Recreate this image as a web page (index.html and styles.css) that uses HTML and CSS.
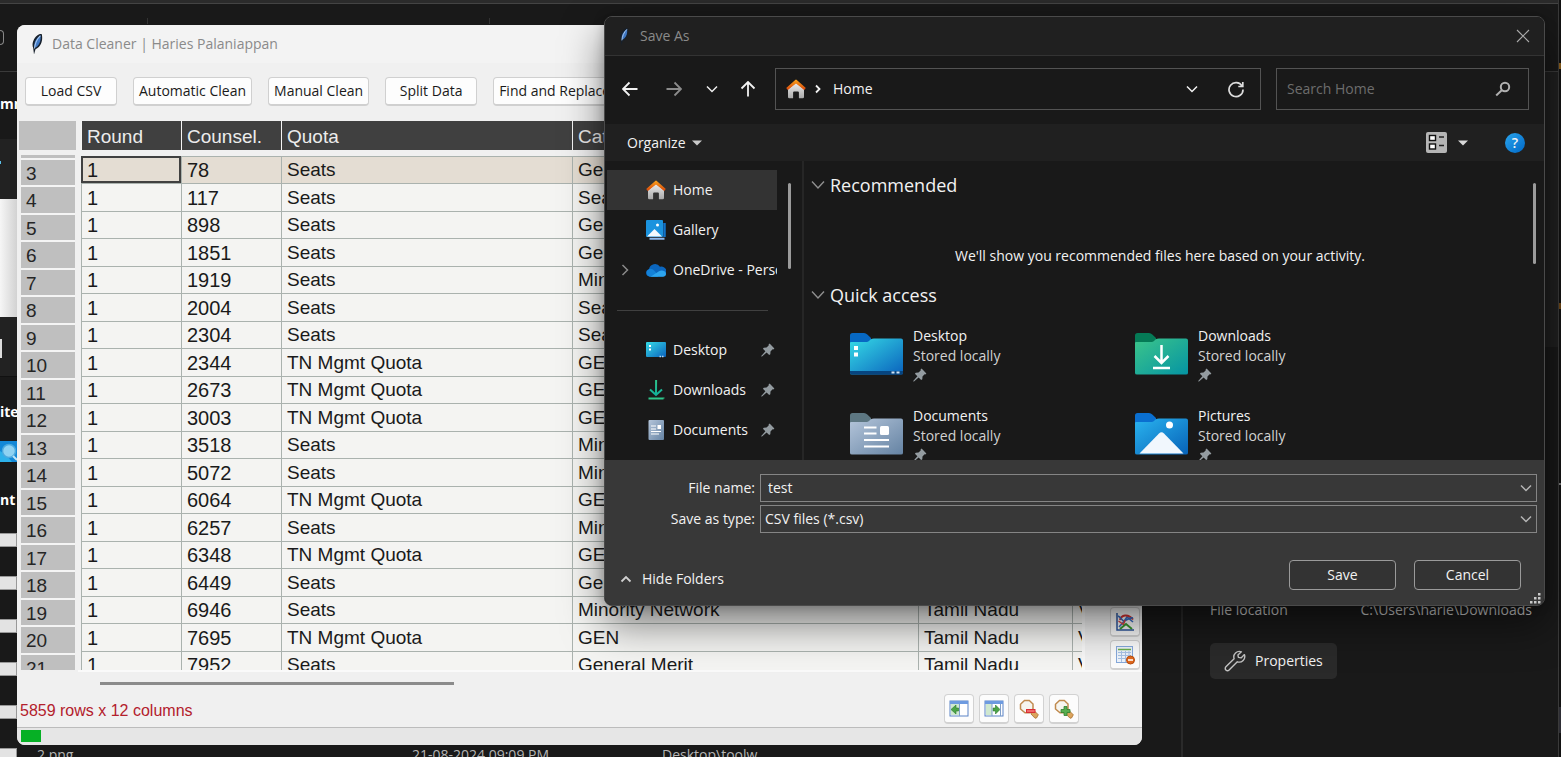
FILE: index.html
```
<!DOCTYPE html>
<html lang="en">
<head>
<meta charset="utf-8">
<title>Data Cleaner</title>
<link rel="stylesheet" href="styles.css">
</head>
<body>
<svg width="0" height="0" class="defs" aria-hidden="true">
  <defs>
    <linearGradient id="g-roof" x1="0" y1="0" x2="0" y2="1"><stop offset="0" stop-color="#f9a01b"/><stop offset="1" stop-color="#d8480b"/></linearGradient>
    <linearGradient id="g-wall" x1="0" y1="0" x2="0" y2="1"><stop offset="0" stop-color="#f2f2f2"/><stop offset="1" stop-color="#a9a9a9"/></linearGradient>
    <linearGradient id="g-desk" x1="0" y1="0" x2="1" y2="1"><stop offset="0" stop-color="#36dbe6"/><stop offset="1" stop-color="#0a62bd"/></linearGradient>
    <linearGradient id="g-down" x1="0" y1="0" x2="1" y2="1"><stop offset="0" stop-color="#3cc58a"/><stop offset="1" stop-color="#0594a3"/></linearGradient>
    <linearGradient id="g-docs" x1="0" y1="0" x2="1" y2="1"><stop offset="0" stop-color="#b4c5da"/><stop offset="1" stop-color="#6583a3"/></linearGradient>
    <linearGradient id="g-pics" x1="0" y1="0" x2="1" y2="1"><stop offset="0" stop-color="#2ab4ef"/><stop offset="1" stop-color="#0762b8"/></linearGradient>
    <linearGradient id="g-arrow" x1="0" y1="0" x2="0" y2="1"><stop offset="0" stop-color="#2fc58a"/><stop offset="1" stop-color="#12b09a"/></linearGradient>
    <symbol id="feather" viewBox="0 0 14 22">
      <path d="M4 21.500 3.200 15C1.600 11 3.200 5.500 7.500 2.200 9.200.9 11 .7 11.800 1.200c1 4.600.2 9.400-3 12.800-1 1.100-2.200 1.800-3.300 2.200z" fill="#17202b"/>
      <path d="M4.600 14.200C3.600 9.800 6 5 10.600 2.400c.6 4.200-.6 8.400-3.400 11-.9.800-1.600 1.100-2.600 1z" fill="#3f78c4"/>
      <path d="M4.500 15.500C5 10.500 7 6 10.400 2.600" stroke="#a9c8ee" stroke-width="1.100" fill="none"/>
    </symbol>
    <symbol id="home" viewBox="0 0 20 20">
      <path d="M2 9.500 10 2.500l8 7V18a1.300 1.300 0 0 1-1.300 1.300h-3.800V13.500a1 1 0 0 0-1-1H8.100a1 1 0 0 0-1 1v5.800H3.300A1.300 1.300 0 0 1 2 18z" fill="url(#g-wall)"/>
      <path d="M9.200.9a1.200 1.200 0 0 1 1.600 0l9 8.200-1.600 1.800L10 3.700 1.800 10.900.2 9.100z" fill="url(#g-roof)"/>
      <path d="M10 1.200 18.800 9.600 18 10.500 10 4.600 2 10.500 1.200 9.600z" fill="url(#g-roof)"/>
    </symbol>
    <symbol id="pin" viewBox="0 0 14 14">
      <path d="M8.600.6 13.400 5.400 12.300 6.500 11.600 6.300 9.500 8.500 9.300 11.200 8.200 12.100 5.600 9.500 1 13.500.3 13.500.4 12.800 4.400 8.300 1.900 5.800 2.800 4.700 5.500 4.600 7.700 2.400 7.500 1.700z" fill="#939ba0"/>
    </symbol>
    <symbol id="chev-down" viewBox="0 0 12 8"><path d="M1 1.500 6 6.500l5-5" fill="none" stroke="currentColor" stroke-width="1.500"/></symbol>
    <symbol id="magnifier" viewBox="0 0 20 20">
      <path d="M12 12.500 15 11.500 19.300 15.800 17.500 19 16 19.200 12 15z" fill="#dba45d" stroke="#a86f2d" stroke-width=".8"/>
      <path d="M5.500 1.500h4.800L14 5v5l-3.600 3.800H6L1.500 10V5.300z" fill="#f6f5ef" stroke="#c08a4e" stroke-width="1.500"/>
    </symbol>
  </defs>
</svg>

<div class="desktop">
  <section class="explorer" aria-label="File explorer">
    <div class="ribbon"></div>
    <div class="tab-marks"><i></i><i></i></div>
    <aside class="side">
      <div class="side-top"><span class="checkbox"></span></div>
      <div class="side-tab"><b>mm</b></div>
      <div class="side-dark"><span class="tick"></span></div>
      <div class="side-light"></div>
      <div class="side-dark short"><span class="page"></span></div>
      <div class="side-label"><b>ites</b></div>
      <svg class="side-pic" viewBox="0 0 17 21"><rect width="17" height="21" fill="#1287d6"/><path d="M0 10 6 14 12 21H0z" fill="#2db1ea"/><circle cx="9" cy="10" r="6.500" fill="#8fd2f2" stroke="#4aa9de" stroke-width="1.500"/><path d="M13 15l4 4" stroke="#bfe5f8" stroke-width="2"/></svg>
      <div class="side-label second"><b>nt</b></div>
      <div class="thumbs"><i></i><i></i><i></i><i></i><i></i><i></i></div>
    </aside>
    <div class="file-row"><span>2.png</span><span>21-08-2024 09:09 PM</span><span>Desktop\toolw</span></div>
    <aside class="details">
      <div class="details-bar"></div>
      <div class="preview"></div>
      <div class="info">
        <dl><dt>File location</dt><dd>C:\Users\harie\Downloads</dd></dl>
        <button class="props" type="button">
          <svg width="22" height="22" viewBox="0 0 22 22" fill="none" stroke="#c4c4c4" stroke-width="1.400" stroke-linejoin="round"><path d="M17.400 1.800a5.600 5.600 0 0 0-7.300 7L1.900 16.800a2.200 2.200 0 0 0 3.200 3.200l8.200-8.200a5.600 5.600 0 0 0 7.100-7.200l-3.300 3.300-2.700-.5-.5-2.500z"/></svg>
          Properties
        </button>
      </div>
    </aside>
    <div class="edge"><i class="gold"></i><i class="gold second"></i><i class="line"></i><i class="bar"></i></div>
  </section>

  <main class="cleaner">
    <header class="cleaner-title"><svg width="14" height="22"><use href="#feather"/></svg><h1>Data Cleaner | Haries Palaniappan</h1></header>
    <nav class="actions">
      <button type="button">Load CSV</button>
      <button type="button">Automatic Clean</button>
      <button type="button">Manual Clean</button>
      <button type="button">Split Data</button>
      <button type="button">Find and Replace</button>
    </nav>
    <div class="work">
      <div class="index">
        <div class="corner"></div>
        <ol>
          <li></li><li>3</li><li>4</li><li>5</li><li>6</li><li>7</li><li>8</li><li>9</li><li>10</li><li>11</li><li>12</li><li>13</li><li>14</li><li>15</li><li>16</li><li>17</li><li>18</li><li>19</li><li>20</li><li>21</li>
        </ol>
      </div>
      <div class="sheet">
        <table>
          <colgroup><col class="c-num"><col class="c-num"><col class="c-quota"><col class="c-cat"><col class="c-state"><col class="c-city"></colgroup>
          <thead><tr><th>Round</th><th>Counsel.</th><th>Quota</th><th>Category</th><th>State</th><th>College</th></tr></thead>
          <tbody>
            <tr class="current"><td>1</td><td>78</td><td>Seats</td><td>General Merit</td><td>Tamil Nadu</td><td>Vellore</td></tr>
            <tr><td>1</td><td>117</td><td>Seats</td><td>Seats</td><td>Tamil Nadu</td><td>Vellore</td></tr>
            <tr><td>1</td><td>898</td><td>Seats</td><td>General Merit</td><td>Tamil Nadu</td><td>Vellore</td></tr>
            <tr><td>1</td><td>1851</td><td>Seats</td><td>General Merit</td><td>Tamil Nadu</td><td>Vellore</td></tr>
            <tr><td>1</td><td>1919</td><td>Seats</td><td>Minority Network</td><td>Tamil Nadu</td><td>Vellore</td></tr>
            <tr><td>1</td><td>2004</td><td>Seats</td><td>Seats</td><td>Tamil Nadu</td><td>Vellore</td></tr>
            <tr><td>1</td><td>2304</td><td>Seats</td><td>Seats</td><td>Tamil Nadu</td><td>Vellore</td></tr>
            <tr><td>1</td><td>2344</td><td>TN Mgmt Quota</td><td>GEN</td><td>Tamil Nadu</td><td>Vellore</td></tr>
            <tr><td>1</td><td>2673</td><td>TN Mgmt Quota</td><td>GEN</td><td>Tamil Nadu</td><td>Vellore</td></tr>
            <tr><td>1</td><td>3003</td><td>TN Mgmt Quota</td><td>GEN</td><td>Tamil Nadu</td><td>Vellore</td></tr>
            <tr><td>1</td><td>3518</td><td>Seats</td><td>Minority Network</td><td>Tamil Nadu</td><td>Vellore</td></tr>
            <tr><td>1</td><td>5072</td><td>Seats</td><td>Minority Network</td><td>Tamil Nadu</td><td>Vellore</td></tr>
            <tr><td>1</td><td>6064</td><td>TN Mgmt Quota</td><td>GEN</td><td>Tamil Nadu</td><td>Vellore</td></tr>
            <tr><td>1</td><td>6257</td><td>Seats</td><td>Minority Network</td><td>Tamil Nadu</td><td>Vellore</td></tr>
            <tr><td>1</td><td>6348</td><td>TN Mgmt Quota</td><td>GEN</td><td>Tamil Nadu</td><td>Vellore</td></tr>
            <tr><td>1</td><td>6449</td><td>Seats</td><td>General Merit</td><td>Tamil Nadu</td><td>Vellore</td></tr>
            <tr><td>1</td><td>6946</td><td>Seats</td><td>Minority Network</td><td>Tamil Nadu</td><td>Vellore</td></tr>
            <tr><td>1</td><td>7695</td><td>TN Mgmt Quota</td><td>GEN</td><td>Tamil Nadu</td><td>Vellore</td></tr>
            <tr><td>1</td><td>7952</td><td>Seats</td><td>General Merit</td><td>Tamil Nadu</td><td>Vellore</td></tr>
          </tbody>
        </table>
      </div>
      <div class="tools">
        <button class="tool" type="button" aria-label="Plot"><svg width="20" height="20" viewBox="0 0 20 20" fill="none"><path d="M2 1v17h17" stroke="#2b55a0" stroke-width="1.500"/><path d="M4 15 9 9.500l3-4.500 6 5" stroke="#3b6fc6" stroke-width="1.600"/><path d="M5 8c1-5 8-7 13-.5" stroke="#d83232" stroke-width="2"/><path d="M3 4c3 1 4 5 6 5s5-4 9-3" stroke="#3b6fc6" stroke-width="1.600"/><path d="m3.500 9 5 3.500L10 8" stroke="#e04545" stroke-width="1.500"/><path d="m5 17 6-5 6 5" stroke="#3b9a32" stroke-width="2"/></svg></button>
        <button class="tool" type="button" aria-label="Remove table"><svg width="20" height="20" viewBox="0 0 20 20"><rect x="1.500" y="1.500" width="16" height="16" fill="#eef4fc" stroke="#86a9dc"/><path d="M3 4.500h13" stroke="#6bb04c" stroke-width="1.500"/><path d="M3 7.500h13M3 10.500h13M3 13.500h13M6.500 6v11M10.500 6v11M14 6v11" stroke="#a7c2e6"/><circle cx="15.500" cy="15" r="4" fill="#e2691e" stroke="#b54d10"/><path d="M13 15h5" stroke="#fff" stroke-width="1.600"/></svg></button>
      </div>
    </div>
    <div class="hscroll"><div class="thumb"></div></div>
    <footer class="status">
      <p>5859 rows x 12 columns</p>
      <button class="tool" type="button" aria-label="Previous pane"><svg width="20" height="20" viewBox="0 0 20 20"><rect x="1" y="2" width="18" height="15" fill="#fff" stroke="#5b83c6"/><rect x="1" y="2" width="18" height="3" fill="#6d9ae0"/><rect x="2" y="5" width="8" height="11" fill="#cfe8cf"/><path d="M2 10.500 7 6v3h2.500v3H7v3z" fill="#4ca448" stroke="#2c7a2c" stroke-width=".6"/><path d="M10.500 5v12" stroke="#7f9fca"/></svg></button>
      <button class="tool" type="button" aria-label="Next pane"><svg width="20" height="20" viewBox="0 0 20 20"><rect x="1" y="2" width="18" height="15" fill="#fff" stroke="#5b83c6"/><rect x="1" y="2" width="18" height="3" fill="#6d9ae0"/><rect x="2" y="5" width="6" height="11" fill="#cfe8cf"/><path d="M16 10.500 11.500 6v3H9v3h2.500v3z" fill="#4ca448" stroke="#2c7a2c" stroke-width=".6"/><path d="M8 5v12M16.500 5v12" stroke="#7f9fca"/></svg></button>
      <button class="tool" type="button" aria-label="Zoom out"><svg width="20" height="20" viewBox="0 0 20 20"><use href="#magnifier"/><rect x="7.500" y="10.500" width="8.500" height="3" fill="#f06a6a" stroke="#d92f35"/></svg></button>
      <button class="tool" type="button" aria-label="Zoom in"><svg width="20" height="20" viewBox="0 0 20 20"><use href="#magnifier"/><path d="M10 7.500h3v3h3v3h-3v3h-3v-3H7v-3h3z" fill="#58ad50" stroke="#2f7f2d" stroke-width=".8"/></svg></button>
    </footer>
    <div class="progress"><div class="chunk"></div></div>
  </main>

  <section class="dialog" role="dialog" aria-label="Save As">
    <header class="dialog-title">
      <svg width="12" height="19"><use href="#feather"/></svg><h2>Save As</h2>
      <button class="plain" type="button" aria-label="Close"><svg width="14" height="14" viewBox="0 0 14 14"><path d="m1 1 12 12M13 1 1 13" stroke="#a8a8a8" stroke-width="1.100"/></svg></button>
    </header>
    <div class="nav-row">
      <button class="plain" type="button" aria-label="Back"><svg width="16" height="16" viewBox="0 0 16 16" fill="none" stroke="#f2f2f2" stroke-width="1.800"><path d="M15.500 8H1M7.500 1.500 1 8l6.500 6.500"/></svg></button>
      <button class="plain" type="button" aria-label="Forward"><svg width="16" height="16" viewBox="0 0 16 16" fill="none" stroke="#8c8c8c" stroke-width="1.800"><path d="M.5 8H15M8.500 1.500 15 8l-6.500 6.500"/></svg></button>
      <button class="plain recent" type="button" aria-label="Recent"><svg width="12" height="8"><use href="#chev-down"/></svg></button>
      <button class="plain up" type="button" aria-label="Up"><svg width="16" height="16" viewBox="0 0 16 16" fill="none" stroke="#f2f2f2" stroke-width="1.800"><path d="M8 15.500V1M1.500 7.500 8 1l6.500 6.500"/></svg></button>
      <div class="address">
        <svg width="20" height="20"><use href="#home"/></svg>
        <svg width="6" height="10" viewBox="0 0 6 10"><path d="m1 1.500 3.500 3.500L1 8.500" fill="none" stroke="#f0f0f0" stroke-width="1.800"/></svg>
        <span>Home</span>
        <button class="plain" type="button" aria-label="History"><svg width="12" height="8"><use href="#chev-down"/></svg></button>
        <button class="plain" type="button" aria-label="Refresh"><svg width="18" height="18" viewBox="0 0 18 18" fill="none" stroke="#ddd" stroke-width="1.700"><path d="M15 6A7 7 0 1 0 16 9.500"/><path d="M15.800 2v4.500h-4.500"/></svg></button>
      </div>
      <label class="search"><input type="text" placeholder="Search Home" aria-label="Search Home"><svg width="16" height="16" viewBox="0 0 16 16" fill="none" stroke="#b0b0b0" stroke-width="2"><circle cx="10" cy="6" r="4.200"/><path d="M7 9 1.200 14.500"/></svg></label>
    </div>
    <div class="command-row">
      <button class="plain organize" type="button">Organize <svg width="10" height="6" viewBox="0 0 10 6"><path d="M0 .5h10L5 5.500z" fill="#c9c9c9"/></svg></button>
      <button class="plain view" type="button" aria-label="View"><svg width="21" height="21" viewBox="0 0 21 21"><rect width="21" height="21" rx="2" fill="#b5b5b5"/><rect x="3.500" y="3.500" width="6" height="5" fill="#fff" stroke="#111" stroke-width="1.400"/><rect x="3.500" y="12" width="6" height="5" fill="#fff" stroke="#111" stroke-width="1.400"/><path d="M13 5h5M13 13.500h5" stroke="#222" stroke-width="1.400"/></svg><svg width="10" height="6" viewBox="0 0 10 6"><path d="M0 .5h10L5 5.500z" fill="#d9d9d9"/></svg></button>
      <button class="plain" type="button" aria-label="Help"><span class="help">?</span></button>
    </div>
    <div class="panes">
      <nav class="tree">
        <ul>
          <li class="on"><i></i><svg width="20" height="20"><use href="#home"/></svg><a href="#home-view">Home</a></li>
          <li><i></i><svg width="20" height="20" viewBox="0 0 20 20"><path d="M18.500 3v14" stroke="#1173c9" stroke-width="2.500"/><path d="M3.500 18.700h15" stroke="#8cb8ee" stroke-width="2"/><rect width="17" height="17" rx="1" fill="#1b93de"/><circle cx="11.500" cy="5" r="1.500" fill="#fff"/><path d="M1 16.500 8.500 9l7.500 7.500z" fill="#f3f8fd"/></svg><a href="#gallery">Gallery</a></li>
          <li class="long"><i><svg width="8" height="12" viewBox="0 0 8 12"><path d="m1.500 1 5 5-5 5" fill="none" stroke="#8a8a8a" stroke-width="1.500"/></svg></i><svg width="20" height="20" viewBox="0 0 20 20"><path d="M3.500 16.500A3.700 3.700 0 0 1 3 9.200 6 6 0 0 1 14 6.800a5 5 0 0 1 3 9.700z" fill="#0b66be"/><path d="M4 16.800a4 4 0 0 1-1-7.600c3-1.500 7 2 9 7.600z" fill="#1482d8"/><path d="M4.500 16.800 13 11.200c3-1.500 6.700 0 7 2.500.1 2-1.200 3.100-3 3.100z" fill="#2da4ee"/></svg><a href="#onedrive">OneDrive - Personal</a></li>
        </ul>
        <hr>
        <ul>
          <li><i></i><svg width="20" height="20" viewBox="0 0 20 20"><rect y="2" width="20" height="15" rx="1" fill="url(#g-desk)"/><path d="M3 5h2v2H3zM3 8.500h2v2H3z" fill="#fff"/><path d="M13.500 16.500h1.500M16 16.500h1.500" stroke="#b9d8f4" stroke-width="1.500"/></svg><a href="#desktop">Desktop</a><svg width="14" height="14"><use href="#pin"/></svg></li>
          <li><i></i><svg width="20" height="20" viewBox="0 0 20 20" fill="none" stroke="url(#g-arrow)" stroke-width="2"><path d="M10.100 0 10 15M4 9.500l6 5.500 6-5.500"/><path d="M2.500 18.500h15v.1" stroke="#2fc58a"/></svg><a href="#downloads">Downloads</a><svg width="14" height="14"><use href="#pin"/></svg></li>
          <li><i></i><svg width="20" height="20" viewBox="0 0 20 20"><rect x="2.500" width="15.500" height="20" rx="1" fill="url(#g-docs)"/><path d="M5 6h5M5 9h5M5 11.500h10M5 14h8" stroke="#fff" stroke-width="1.200"/><path d="M11.500 5H15v4h-3.500z" fill="#fff"/></svg><a href="#documents">Documents</a><svg width="14" height="14"><use href="#pin"/></svg></li>
        </ul>
        <div class="scroll-thumb"></div>
      </nav>
      <div class="content">
        <h3><svg width="14" height="10" viewBox="0 0 14 10"><path d="m1 1.500 6 6.500 6-6.500" fill="none" stroke="#8f8f8f" stroke-width="1.400"/></svg>Recommended</h3>
        <p class="empty">We'll show you recommended files here based on your activity.</p>
        <h3><svg width="14" height="10" viewBox="0 0 14 10"><path d="m1 1.500 6 6.500 6-6.500" fill="none" stroke="#8f8f8f" stroke-width="1.400"/></svg>Quick access</h3>
        <div class="quick">
          <div class="item"><svg width="53" height="42" viewBox="0 0 53 42"><path d="M0 2.500Q0 0 2.500 0H14q2 0 3.300 1.500L21 5v5H0z" fill="#0768c3"/><path d="M0 10q0-1 1-1h15.500q1.500 0 2.500-1l1.500-1.500Q22 5.500 24 5.500H51q2 0 2 2v32.500q0 1.500-2 1.500H2q-2 0-2-1.500z" fill="url(#g-desk)"/><path d="M0 38h53v2q0 1.500-2 1.500H2Q0 41.500 0 40z" fill="#074580"/><path d="M4 13h4v4H4zM4 19.500h4v4H4z" fill="#fff"/><path d="M41.500 38.500h3v2h-3zM46.500 38.500h3v2h-3z" fill="#cfe4f6"/></svg><div><b>Desktop</b><span>Stored locally</span><svg width="14" height="14"><use href="#pin"/></svg></div></div>
          <div class="item"><svg width="53" height="42" viewBox="0 0 53 42"><path d="M0 2.500Q0 0 2.500 0H14q2 0 3.300 1.500L21 5v5H0z" fill="#057a56"/><path d="M0 10q0-1 1-1h15.500q1.500 0 2.500-1l1.500-1.500Q22 5.500 24 5.500H51q2 0 2 2v32.500q0 1.500-2 1.500H2q-2 0-2-1.500z" fill="url(#g-down)"/><path d="M26.500 12v17M19.500 23l7 7 7-7M18 35h17" fill="none" stroke="#fff" stroke-width="2.500"/></svg><div><b>Downloads</b><span>Stored locally</span><svg width="14" height="14"><use href="#pin"/></svg></div></div>
          <div class="item"><svg width="53" height="42" viewBox="0 0 53 42"><path d="M0 2.500Q0 0 2.500 0H14q2 0 3.300 1.500L21 5v5H0z" fill="#5d7782"/><path d="M0 10q0-1 1-1h15.500q1.500 0 2.500-1l1.500-1.500Q22 5.500 24 5.500H51q2 0 2 2v32.500q0 1.500-2 1.500H2q-2 0-2-1.500z" fill="url(#g-docs)"/><path d="M14 14.500h12.500M14 20.500h12.500M14 27h25M14 33.500h25" stroke="#fff" stroke-width="2.200"/><rect x="30" y="13" width="9" height="9" rx="1.500" fill="#fff"/></svg><div><b>Documents</b><span>Stored locally</span><svg width="14" height="14"><use href="#pin"/></svg></div></div>
          <div class="item"><svg width="53" height="42" viewBox="0 0 53 42"><path d="M0 2.500Q0 0 2.500 0H14q2 0 3.300 1.500L21 5v5H0z" fill="#0a6fd0"/><path d="M0 10q0-1 1-1h15.500q1.500 0 2.500-1l1.500-1.500Q22 5.500 24 5.500H51q2 0 2 2v32.500q0 1.500-2 1.500H2q-2 0-2-1.500z" fill="url(#g-pics)"/><path d="M4.500 40.500 24 20.500q2.500-2.500 5 0l19.500 20z" fill="#f1f7fd"/><circle cx="34.500" cy="12" r="3.500" fill="#fff"/></svg><div><b>Pictures</b><span>Stored locally</span><svg width="14" height="14"><use href="#pin"/></svg></div></div>
        </div>
        <div class="scroll-thumb"></div>
      </div>
    </div>
    <footer class="save-form">
      <div class="fields">
        <label for="fname">File name:</label>
        <div class="combo"><input id="fname" type="text" value="test"><svg width="12" height="8"><use href="#chev-down"/></svg></div>
        <label for="ftype">Save as type:</label>
        <div class="combo"><select id="ftype"><option>CSV files (*.csv)</option></select><svg width="12" height="8"><use href="#chev-down"/></svg></div>
      </div>
      <div class="buttons">
        <button class="plain hide" type="button"><svg width="12" height="8" viewBox="0 0 12 8"><path d="m1.500 6.500 4.500-4.500 4.500 4.500" fill="none" stroke="#d0d0d0" stroke-width="1.800"/></svg>Hide Folders</button>
        <button class="push" type="button">Save</button>
        <button class="push" type="button">Cancel</button>
      </div>
      <svg class="grip" width="11" height="11" viewBox="0 0 11 11" fill="#c9c9c9"><path d="M8 0h2.500v2.500H8zM4 4h2.500v2.500H4zM8 4h2.500v2.500H8zM0 8h2.500v2.500H0zM4 8h2.500v2.500H4zM8 8h2.500v2.500H8z"/></svg>
    </footer>
  </section>
</div>
</body>
</html>
```
FILE: styles.css
```
* { box-sizing: border-box; margin: 0; padding: 0; }
html, body { height: 100%; }
body {
  background: #191919;
  color: #f2f2f2;
  font: 14px/20px "Open Sans", "Noto Sans", sans-serif;
  overflow: hidden;
}
button, input, select { font: inherit; color: inherit; background: none; border: 0; outline: 0; }
a { color: inherit; text-decoration: none; }
ul, ol { list-style: none; }
svg { display: block; flex: none; }
.defs { position: absolute; }
.plain { display: flex; align-items: center; justify-content: center; }
.desktop { position: relative; height: 100vh; overflow: hidden; }

/* file explorer behind the windows */
.explorer {
  height: 100%;
  display: grid;
  grid-template: 4px 20px 1fr 14px / 17px 1fr 377px 3px;
}
.ribbon { grid-area: 1 / 1 / 2 / 4; background: #2b2b2b; border-bottom: 1px solid #444; }
.tab-marks { grid-area: 2 / 1 / 3 / 3; display: flex; gap: 341px; padding: 14px 0 0 147px; }
.tab-marks i { width: 1px; background: #333; }
.side { grid-area: 2 / 1 / 5 / 2; overflow: hidden; display: flex; flex-direction: column; color: #fff; }
.side > * { flex: none; }
.side-top { height: 68px; padding-top: 26px; border-bottom: 1px solid #3a3a3a; }
.checkbox { display: block; width: 4px; height: 15px; border: 1px solid #888; border-left: 0; border-radius: 0 4px 4px 0; }
.side-tab { height: 67px; padding-top: 22px; }
.side-dark { height: 60px; background: #222; padding-top: 22px; }
.side-dark.short { border-bottom: 1px solid #111; }
.tick { display: block; width: 1px; height: 3px; background: #5bc0e8; }
.side-light { height: 118px; background: linear-gradient(90deg, #f6f6f6, #d2d2d2); }
.page { display: block; width: 2px; height: 19px; background: #ddd; }
.side-label { height: 64px; padding-top: 25px; }
.side-label.second { height: 71px; padding-top: 28px; }
.side-pic { width: 17px; height: 21px; }
.thumbs { display: grid; gap: 29px; }
.thumbs i { height: 14px; border: 1px solid #999; border-left: 0; background: #e3e3e3; }
.file-row { grid-area: 4 / 1 / 5 / 3; display: grid; grid-template-columns: 375px 250px 1fr; padding: 2px 0 0 37px; color: #b5b5b5; overflow: hidden; }
.details { grid-area: 2 / 3 / 5 / 4; display: flex; flex-direction: column; overflow: hidden; }
.details-bar { height: 68px; border-bottom: 1px solid #3a3a3a; }
.preview { height: 275px; background: #202020; }
.info { flex: 1; border-left: 2px solid #2a2a2a; padding: 253px 26px 0 27px; }
.info dl { display: flex; justify-content: space-between; color: #c8c8c8; }
.props { display: flex; align-items: center; gap: 9px; height: 36px; margin-top: 23px; padding: 0 14px; background: #2a2a2a; border-radius: 5px; }
.edge { grid-area: 1 / 4 / 5 / 5; border-left: 1px solid #3a3a3a; display: flex; flex-direction: column; background: #121212; }
.edge .gold { height: 6px; margin-top: 63px; background: #8a5d1a; }
.edge .gold.second { margin-top: 234px; background: #6b4414; }
.edge .line { height: 2px; margin-top: 174px; background: #777; }
.edge .bar { height: 26px; margin-top: 222px; background: #2e2e35; }

/* data cleaner */
.cleaner {
  position: absolute;
  inset: 25px 419px 12px 17px;
  display: flex;
  flex-direction: column;
  background: #f0f0f0;
  color: #1a1a1a;
  border-radius: 8px;
  overflow: hidden;
}
.cleaner-title { display: flex; align-items: center; gap: 8px; height: 38px; padding-left: 13px; background: #f3f3f3; color: #8a8a8a; }
h1, h2 { font-size: 14px; font-weight: 400; }
.actions { display: flex; gap: 16px; height: 58px; padding: 14px 0 0 8px; }
.actions button { flex: none; min-width: 92px; height: 29px; padding: 0 5px; background: #fdfdfd; border: 1px solid #d0d0d0; border-bottom-width: 2px; border-radius: 4px; }
.work { flex: 1; min-height: 0; display: flex; overflow: hidden; font: 19px/27px "Liberation Sans", Arial, sans-serif; }
.index { width: 57px; margin-left: 2px; flex: none; overflow: hidden; }
.corner { height: 29px; background: #bfbfbf; }
.index ol { margin: 5px 1px 0 2px; }
.index li { height: 28px; padding-left: 5px; background: #bfbfbf; border-bottom: 2px solid #f4f4f4; color: #262626; }
.index li:nth-child(even) { height: 27px; }
.index li:first-child { height: 5px; }
.sheet { flex: 1; min-width: 0; margin-left: 5px; overflow: hidden; border-right: 3px solid #f8f8f8; }
table { width: 1131px; table-layout: fixed; border-spacing: 0; }
.c-num { width: 100px; }
.c-quota { width: 291px; }
.c-cat { width: 346px; }
.c-state { width: 154px; }
.c-city { width: 140px; }
thead th { height: 29px; padding: 2px 0 0 5px; background: #404040; color: #ececec; font-weight: 400; text-align: left; border-left: 1px solid #f4f4f4; }
tbody::before { content: ""; display: block; height: 6px; }
tbody td { height: 27px; line-height: 24px; padding-left: 5px; background: #f4f4f2; border: solid #aab2ae; border-width: 1px 0 0 1px; white-space: nowrap; }
tbody tr:nth-child(even) td { height: 28px; }
tbody td:nth-child(-n+2) { font-size: 20px; }
.current td { background: #e4ddd3; }
.current td:first-child { border-color: #404040; box-shadow: inset -2px -2px #404040, inset 1px 1px #404040; }
.tools { width: 57px; flex: none; display: flex; flex-direction: column; justify-content: flex-end; align-items: flex-end; gap: 3px; padding-right: 2px; }
.tool { display: grid; place-items: center; width: 30px; height: 30px; background: #fcfcfc; border: 1px solid #d2d2d2; border-bottom-width: 2px; border-radius: 4px; }
.hscroll { height: 24px; margin-left: 61px; padding: 10px 0 0 22px; border-top: 2px solid #fafafa; }
.thumb { width: 34%; height: 3px; background: #8b8b8b; }
.status { display: flex; gap: 5px; height: 33px; padding: 0 63px 3px 3px; }
.status p { flex: 1; padding-top: 2px; font: 16px/30px "Liberation Sans", Arial, sans-serif; color: #b3202c; }
.progress { height: 18px; padding: 2px 4px; background: #e6e6e6; border-top: 1px solid #bcbcbc; }
.chunk { width: 20px; height: 12px; background: #06b025; }

/* save dialog */
.dialog {
  position: absolute;
  inset: 16px 16px 151px 604px;
  display: flex;
  flex-direction: column;
  background: #191919;
  border: 1px solid #4a4a4a;
  border-radius: 8px;
  box-shadow: 0 18px 40px rgba(0, 0, 0, .5), 0 0 12px rgba(0, 0, 0, .2);
  overflow: hidden;
}
.dialog-title { display: flex; align-items: center; gap: 10px; height: 39px; padding: 0 14px 0 13px; background: #202020; border-bottom: 1px solid #333; color: #8a8a8a; }
.dialog-title h2 { flex: 1; }
.nav-row { display: flex; align-items: center; height: 68px; padding: 0 15px 2px 17px; }
.nav-row > .plain { width: 16px; margin-right: 28px; }
.nav-row > .recent { width: 12px; margin: 0 22px 0 -4px; color: #eee; }
.nav-row > .up { margin-right: 19px; }
.address { flex: 459; display: flex; align-items: center; gap: 9px; height: 42px; padding: 0 15px 0 10px; border: 1px solid #535353; }
.address span { flex: 1; padding-left: 3px; }
.address .plain + .plain { margin-left: 20px; }
.search { flex: 224; display: flex; align-items: center; height: 42px; margin-left: 15px; padding: 0 17px 0 10px; border: 1px solid #535353; }
.search input { flex: 1; min-width: 0; }
.search input::placeholder { color: #6d6d6d; opacity: 1; }
.command-row { display: flex; align-items: center; height: 37px; padding: 0 19px 0 22px; background: #202020; }
.organize { gap: 6px; margin-right: auto; }
.view { gap: 11px; margin-right: 37px; }
.help { width: 20px; height: 20px; border-radius: 50%; background: linear-gradient(135deg, #2aa5ee, #0067c5); font-weight: 600; font-size: 14px; line-height: 20px; text-align: center; }
.panes { flex: 1; min-height: 0; display: flex; }
.tree { position: relative; width: 199px; flex: none; padding: 9px 25px 0 2px; border-right: 2px solid #262626; overflow: hidden; }
.tree li { display: flex; align-items: center; height: 40px; padding: 0 2px 0 14px; }
.tree li.long { padding-right: 0; }
.tree li.on { background: #333; }
.tree li > i { width: 25px; flex: none; }
.tree a { flex: 1; margin-left: 7px; white-space: nowrap; overflow: hidden; }
.tree hr { margin: 20px 9px 19px 10px; border: 0; border-top: 1px solid #404040; }
.scroll-thumb { position: absolute; top: 22px; right: 11px; width: 3px; height: 86px; border-radius: 2px; background: #9b9b9b; }
.content { position: relative; flex: 1; min-width: 0; overflow: hidden; padding: 10px 0 0 7px; }
.content .scroll-thumb { right: 8px; height: 81px; }
h3 { display: flex; align-items: center; gap: 5px; height: 28px; font-size: 18px; font-weight: 400; }
.empty { padding: 47px 35px 15px 0; text-align: center; }
.quick { display: grid; grid-template-columns: 285px 285px; grid-auto-rows: 80px; padding: 17px 0 0 39px; }
.item { display: flex; gap: 10px; }
.item > svg { margin-top: 7px; }
.item b, .item span { display: block; font-weight: 400; }
.item span { color: #d2d2d2; }
.item div svg { margin-top: 2px; }
.save-form { position: relative; padding: 14px 7px 15px 10px; background: #383838; }
.fields { display: grid; grid-template-columns: 140px 1fr; gap: 3px 5px; align-items: center; }
.fields label { text-align: right; }
.combo { display: flex; align-items: center; height: 28px; padding: 0 4px; border: 1px solid #858585; color: #b5b5b5; }
.combo input, .combo select { flex: 1; min-width: 0; color: #f2f2f2; appearance: none; }
.combo input { padding-left: 3px; }
.buttons { display: flex; align-items: center; gap: 18px; margin-top: 27px; padding: 0 16px 0 5px; }
.hide { gap: 10px; margin-right: auto; padding-top: 7px; }
.push { width: 107px; height: 30px; background: #333; border: 1px solid #9a9a9a; border-radius: 4px; }
.grip { position: absolute; right: 3px; bottom: 1px; }
```
